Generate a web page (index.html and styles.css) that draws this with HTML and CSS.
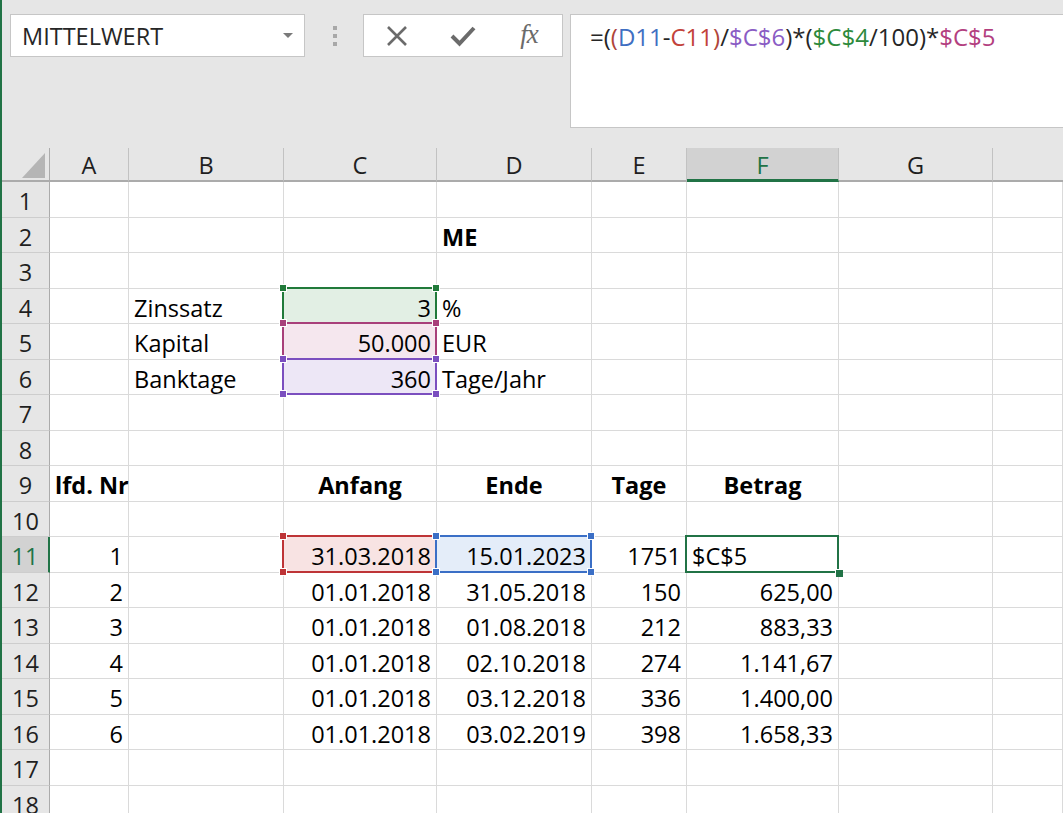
FILE: index.html
```html
<!DOCTYPE html>
<html lang="de">
<head>
<meta charset="utf-8">
<title>Excel</title>
<link rel="stylesheet" href="styles.css">
</head>
<body>
<div class="app">
  <div class="toolbar">
    <div class="namebox"><span>MITTELWERT</span><span class="caret"></span></div>
    <div class="grip"><span></span><span></span><span></span></div>
    <div class="buttons">
      <div class="btn"><svg width="24" height="24" viewBox="0 0 24 24"><path d="M3 3L21 21M21 3L3 21" stroke="#6b6b6b" stroke-width="2.6" fill="none"/></svg></div>
      <div class="btn"><svg width="26" height="22" viewBox="0 0 26 22"><path d="M2 11L9.5 18.5L24 3" stroke="#6b6b6b" stroke-width="4" fill="none" stroke-linejoin="miter"/></svg></div>
      <div class="btn fx">fx</div>
    </div>
    <div class="formula">=(<span class="p-red">(</span><span class="f-blue">D11</span>-<span class="f-red">C11</span><span class="p-red">)</span>/<span class="f-purple">$C$6</span>)*(<span class="f-green">$C$4</span>/100)*<span class="f-mag">$C$5</span></div>
  </div>
  <div class="sheet">
    <div class="corner"><svg width="23" height="25" viewBox="0 0 23 25"><polygon points="23,0 23,25 0,25" fill="#b5b5b5"/></svg></div>
    <div class="ch">A</div><div class="ch">B</div><div class="ch">C</div><div class="ch">D</div><div class="ch">E</div><div class="ch sel">F</div><div class="ch">G</div><div class="ch last"></div>

    <div class="rh">1</div><div class="c"></div><div class="c"></div><div class="c"></div><div class="c"></div><div class="c"></div><div class="c"></div><div class="c"></div><div class="c"></div>
    <div class="rh">2</div><div class="c"></div><div class="c"></div><div class="c"></div><div class="c b">ME</div><div class="c"></div><div class="c"></div><div class="c"></div><div class="c"></div>
    <div class="rh">3</div><div class="c"></div><div class="c"></div><div class="c"></div><div class="c"></div><div class="c"></div><div class="c"></div><div class="c"></div><div class="c"></div>
    <div class="rh">4</div><div class="c"></div><div class="c">Zinssatz</div><div class="c r ref ref-green">3</div><div class="c">%</div><div class="c"></div><div class="c"></div><div class="c"></div><div class="c"></div>
    <div class="rh">5</div><div class="c"></div><div class="c">Kapital</div><div class="c r ref ref-mag">50.000</div><div class="c">EUR</div><div class="c"></div><div class="c"></div><div class="c"></div><div class="c"></div>
    <div class="rh">6</div><div class="c"></div><div class="c">Banktage</div><div class="c r ref ref-purple">360</div><div class="c">Tage/Jahr</div><div class="c"></div><div class="c"></div><div class="c"></div><div class="c"></div>
    <div class="rh">7</div><div class="c"></div><div class="c"></div><div class="c"></div><div class="c"></div><div class="c"></div><div class="c"></div><div class="c"></div><div class="c"></div>
    <div class="rh">8</div><div class="c"></div><div class="c"></div><div class="c"></div><div class="c"></div><div class="c"></div><div class="c"></div><div class="c"></div><div class="c"></div>
    <div class="rh">9</div><div class="c b">lfd. Nr</div><div class="c"></div><div class="c b ctr">Anfang</div><div class="c b ctr">Ende</div><div class="c b ctr">Tage</div><div class="c b ctr">Betrag</div><div class="c"></div><div class="c"></div>
    <div class="rh">10</div><div class="c"></div><div class="c"></div><div class="c"></div><div class="c"></div><div class="c"></div><div class="c"></div><div class="c"></div><div class="c"></div>
    <div class="rh sel">11</div><div class="c r">1</div><div class="c"></div><div class="c r ref ref-red">31.03.2018</div><div class="c r ref ref-blue">15.01.2023</div><div class="c r">1751</div><div class="c active">$C$5</div><div class="c"></div><div class="c"></div>
    <div class="rh">12</div><div class="c r">2</div><div class="c"></div><div class="c r">01.01.2018</div><div class="c r">31.05.2018</div><div class="c r">150</div><div class="c r">625,00</div><div class="c"></div><div class="c"></div>
    <div class="rh">13</div><div class="c r">3</div><div class="c"></div><div class="c r">01.01.2018</div><div class="c r">01.08.2018</div><div class="c r">212</div><div class="c r">883,33</div><div class="c"></div><div class="c"></div>
    <div class="rh">14</div><div class="c r">4</div><div class="c"></div><div class="c r">01.01.2018</div><div class="c r">02.10.2018</div><div class="c r">274</div><div class="c r">1.141,67</div><div class="c"></div><div class="c"></div>
    <div class="rh">15</div><div class="c r">5</div><div class="c"></div><div class="c r">01.01.2018</div><div class="c r">03.12.2018</div><div class="c r">336</div><div class="c r">1.400,00</div><div class="c"></div><div class="c"></div>
    <div class="rh">16</div><div class="c r">6</div><div class="c"></div><div class="c r">01.01.2018</div><div class="c r">03.02.2019</div><div class="c r">398</div><div class="c r">1.658,33</div><div class="c"></div><div class="c"></div>
    <div class="rh">17</div><div class="c"></div><div class="c"></div><div class="c"></div><div class="c"></div><div class="c"></div><div class="c"></div><div class="c"></div><div class="c"></div>
    <div class="rh">18</div><div class="c"></div><div class="c"></div><div class="c"></div><div class="c"></div><div class="c"></div><div class="c"></div><div class="c"></div><div class="c"></div>
  </div>
</div>
</body>
</html>
```
FILE: styles.css
```css
* { box-sizing: border-box; }

body {
  margin: 0;
  background: #e6e6e6;
  font-family: "Open Sans", "Liberation Sans", sans-serif;
}

.app {
  width: 1063px;
  height: 813px;
  overflow: hidden;
  border-left: 2px solid #217346;
  background: #e6e6e6;
}

/* ---------- formula bar ---------- */
.toolbar {
  height: 148px;
  display: flex;
  align-items: flex-start;
  padding: 14px 0 0 8px;
}

.namebox {
  width: 295px;
  height: 43px;
  background: #fff;
  border: 1px solid #c6c6c6;
  display: flex;
  align-items: center;
  justify-content: space-between;
  padding: 0 11px 0 11px;
  font-size: 23.5px;
  color: #262626;
}

.caret {
  width: 0;
  height: 0;
  border-left: 5px solid transparent;
  border-right: 5px solid transparent;
  border-top: 5px solid #7a7a7a;
}

.grip {
  display: flex;
  flex-direction: column;
  gap: 4px;
  margin: 12px 0 0 28px;
}

.grip span {
  width: 4px;
  height: 4px;
  background: #a8a8a8;
}

.buttons {
  width: 200px;
  height: 43px;
  margin-left: 26px;
  background: #fff;
  border: 1px solid #c6c6c6;
  display: flex;
}

.btn {
  flex: 1;
  display: flex;
  align-items: center;
  justify-content: center;
}

.fx {
  font-family: "Liberation Serif", serif;
  font-style: italic;
  font-size: 27px;
  color: #6b6b6b;
  letter-spacing: -1px;
  padding-bottom: 2px;
}

.formula {
  margin-left: 7px;
  flex: 1;
  height: 114px;
  background: #fff;
  border: 1px solid #c6c6c6;
  border-right: none;
  padding: 6px 0 0 19px;
  font-size: 24px;
  line-height: 32px;
  white-space: nowrap;
  color: #262626;
}

.p-red { color: #b0463a; }
.f-blue { color: #3f6fc2; }
.f-red { color: #c2423a; }
.f-purple { color: #8a5cc4; }
.f-green { color: #2d8a3c; }
.f-mag { color: #b3407f; }

/* ---------- sheet ---------- */
.sheet {
  display: grid;
  grid-template-columns: 48px 79px 155px 153px 155px 95px 152px 154px 1fr;
  grid-template-rows: 34px;
  grid-auto-rows: 35.5px;
  font-size: 23.5px;
  background: #fff;
}

.corner {
  background: #e6e6e6;
  border-right: 1px solid #ababab;
  border-bottom: 2px solid #ababab;
  display: flex;
  align-items: flex-end;
  justify-content: flex-end;
  padding: 0 4px 2px 0;
}

.ch {
  background: #e6e6e6;
  border-right: 1px solid #c2c2c2;
  border-bottom: 2px solid #ababab;
  text-align: center;
  line-height: 34px;
  color: #1f1f1f;
}

.ch.last { border-right: none; }

.ch.sel {
  background: #d2d2d2;
  border-bottom: 3px solid #217346;
  color: #217346;
}

.rh {
  background: #e6e6e6;
  border-right: 1px solid #ababab;
  border-bottom: 1px solid #cdcdcd;
  text-align: center;
  line-height: 35px;
  padding-top: 2px;
  color: #1f1f1f;
}

.rh.sel {
  background: #d2d2d2;
  border-right: 2px solid #217346;
  color: #217346;
}

.c {
  border-right: 1px solid #dadada;
  border-bottom: 1px solid #dadada;
  padding: 2px 5px 0;
  line-height: 35px;
  white-space: nowrap;
  color: #000;
}

.r { text-align: right; }
.b { font-weight: 700; }
.ctr { text-align: center; }

/* reference highlight boxes */
.ref { position: relative; }

.ref::before {
  content: "";
  position: absolute;
  top: -2px;
  left: -2px;
  right: -1px;
  bottom: -1px;
  border: 2px solid var(--rc);
}

.ref::after {
  content: "";
  position: absolute;
  top: -5px;
  left: -5px;
  right: -4px;
  bottom: -4px;
  background:
    linear-gradient(var(--rc), var(--rc)) left 1px top 1px / 6px 6px no-repeat,
    linear-gradient(var(--rc), var(--rc)) right 1px top 1px / 6px 6px no-repeat,
    linear-gradient(var(--rc), var(--rc)) left 1px bottom 1px / 6px 6px no-repeat,
    linear-gradient(var(--rc), var(--rc)) right 1px bottom 1px / 6px 6px no-repeat,
    linear-gradient(#fff, #fff) left top / 8px 8px no-repeat,
    linear-gradient(#fff, #fff) right top / 8px 8px no-repeat,
    linear-gradient(#fff, #fff) left bottom / 8px 8px no-repeat,
    linear-gradient(#fff, #fff) right bottom / 8px 8px no-repeat;
}

.ref-green { --rc: #217a3a; background: #e2efe4; }
.ref-mag { --rc: #a8407a; background: #f5e7ee; }
.ref-purple { --rc: #7b4fbf; background: #ede7f6; }
.ref-red { --rc: #be3437; background: #f8e3e3; }
.ref-blue { --rc: #3b6fc6; background: #e4edf9; }

/* active cell */
.active { position: relative; }

.active::before {
  content: "";
  position: absolute;
  top: -2px;
  left: -2px;
  right: -1px;
  bottom: -1px;
  border: 2px solid #217346;
}

.active::after {
  content: "";
  position: absolute;
  right: -5px;
  bottom: -5px;
  width: 7px;
  height: 7px;
  background: #217346;
  border-left: 1px solid #fff;
  border-top: 1px solid #fff;
}
```
